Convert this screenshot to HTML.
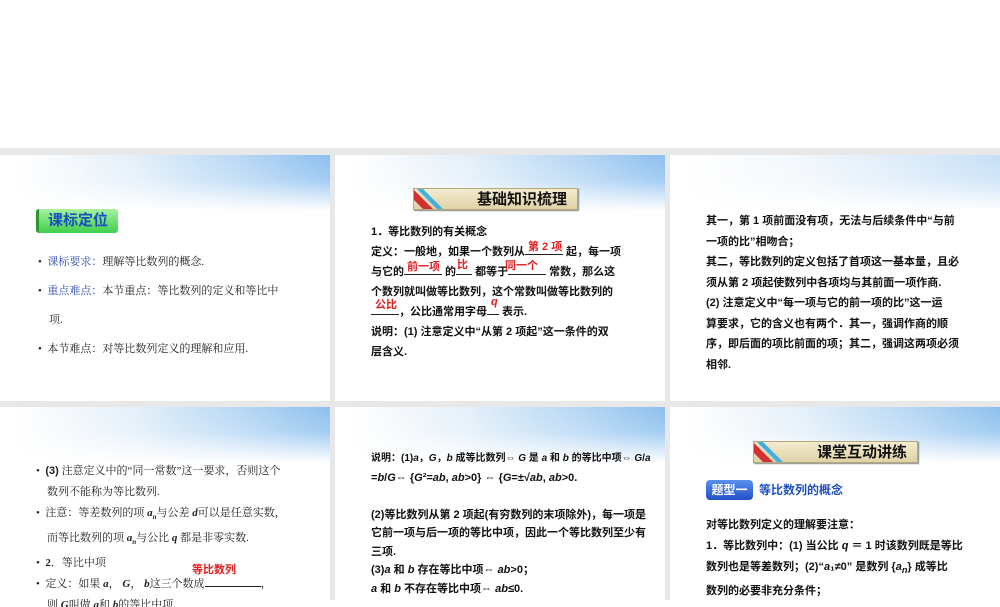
<!DOCTYPE html>
<html><head><meta charset="utf-8"><style>
*{margin:0;padding:0;box-sizing:border-box}
body{width:1000px;height:600px;background:#fff;position:relative;overflow:hidden;font-family:"Liberation Serif","Noto Serif CJK SC","Noto Sans CJK SC",serif;color:#222}
.gap{position:absolute;left:0;top:148px;width:1000px;height:452px;background:#e8e8e8}
.s{position:absolute;width:330px;background:#fff;overflow:hidden}
.hd{position:absolute;left:0;top:0;width:330px;height:55px;background:linear-gradient(90deg,#fff 5%,#e4f0fa 40%,#b4d6f4 75%,#8cc0ee 100%)}
.hd2{position:absolute;left:0;top:0;width:330px;height:56px;background:linear-gradient(180deg,rgba(255,255,255,0) 0%,rgba(255,255,255,.2) 45%,#fff 100%)}
.t{position:absolute;font-size:11px;line-height:20px;font-family:"Liberation Sans","Noto Sans CJK SC",sans-serif;font-weight:bold;color:#111}
.r{color:#e02020;font-weight:bold;position:absolute;font-size:11px;font-family:"Liberation Sans","Noto Sans CJK SC",sans-serif}
.u{display:inline-block;border-bottom:1px solid #222;height:12px}
.ban{position:absolute;height:22px;background:linear-gradient(#f4ecd0,#e0d2a6);border:1px solid #b8a878;box-shadow:1px 1px 1px #888;font-family:"Liberation Sans","Noto Sans CJK SC",sans-serif;font-weight:bold;font-size:15px;color:#111;text-align:right;padding-right:10px;line-height:21px;overflow:hidden}
.ban i{position:absolute;top:-4px;height:30px;transform:skewX(45deg)}
.pl{position:absolute;font-size:11px;line-height:25px;color:#222;font-family:"Liberation Serif","Noto Serif CJK SC",serif}
</style></head><body>
<div class="gap"></div>

<div class="s" style="left:0;top:155px;height:246px">
<div class="hd"></div><div class="hd2"></div>
<div style="position:absolute;left:36px;top:54px;width:82px;height:24px;background:linear-gradient(#a8f0a0,#3fd04a);border-radius:3px;border-left:3px solid #2a9a30;font-family:'Liberation Sans','Noto Sans CJK SC',sans-serif;font-weight:bold;font-size:15px;color:#1a4fc0;line-height:24px;padding-left:9px">课标定位</div>
<div class="pl" style="left:38px;top:93px;width:290px;line-height:29px">
• &nbsp;<span style="color:#3050b0">课标要求：</span>理解等比数列的概念.<br>
• &nbsp;<span style="color:#3050b0">重点难点：</span>本节重点：等比数列的定义和等比中<br>
&nbsp;&nbsp;&nbsp;&nbsp;项.<br>
• &nbsp;本节难点：对等比数列定义的理解和应用.</div>
</div>

<div class="s" style="left:335px;top:155px;height:246px">
<div class="hd"></div><div class="hd2"></div>
<div class="ban" style="left:78px;top:33px;width:165px"><i style="left:0;width:10px;background:#d03030"></i><i style="left:14px;width:6px;background:#40b0e0"></i>基础知识梳理</div>
<div class="t" style="left:36px;top:67px;width:290px">1．等比数列的有关概念<br>
定义：一般地，如果一个数列从<span class="u" style="width:38px"></span> 起，每一项<br>
与它的<span class="u" style="width:38px"></span> 的<span class="u" style="width:16px"></span> 都等于<span class="u" style="width:38px"></span> 常数，那么这<br>
个数列就叫做等比数列，这个常数叫做等比数列的<br>
<span class="u" style="width:28px"></span>，公比通常用字母<span class="u" style="width:12px"></span> 表示.<br>
说明：(1) 注意定义中“从第 2 项起”这一条件的双<br>层含义.</div>
<div class="r" style="left:193px;top:83px">第 2 项</div>
<div class="r" style="left:72px;top:103px">前一项</div>
<div class="r" style="left:122px;top:101px">比</div>
<div class="r" style="left:170px;top:102px">同一个</div>
<div class="r" style="left:40px;top:141px">公比</div>
<div class="r" style="left:156px;top:141px;font-style:italic">q</div>
</div>

<div class="s" style="left:670px;top:155px;height:246px">
<div class="hd" style="opacity:.5"></div><div class="hd2"></div>
<div class="t" style="left:36px;top:56px;width:292px;line-height:20.5px">其一，第 1 项前面没有项，无法与后续条件中“与前<br>一项的比”相吻合；<br>其二，等比数列的定义包括了首项这一基本量，且必<br>须从第 2 项起使数列中各项均与其前面一项作商.<br>(2) 注意定义中“每一项与它的前一项的比”这一运<br>算要求，它的含义也有两个．其一，强调作商的顺<br>序，即后面的项比前面的项；其二，强调这两项必须<br>相邻.</div>
</div>

<div class="s" style="left:0;top:407px;height:200px">
<div class="hd"></div><div class="hd2"></div>
<div class="pl" style="left:36px;top:54px;width:292px;line-height:21px">
• &nbsp;<b style="font-family:'Liberation Sans',sans-serif">(3)</b> 注意定义中的“同一常数”这一要求，否则这个<br>
&nbsp;&nbsp;&nbsp;&nbsp;数列不能称为等比数列.<br>
• &nbsp;注意：等差数列的项 <b><i>a<sub style="font-size:7px">n</sub></i></b>与公差 <b><i>d</i></b>可以是任意实数，<br>
&nbsp;&nbsp;&nbsp;&nbsp;而等比数列的项 <b><i>a<sub style="font-size:7px">n</sub></i></b>与公比 <b><i>q</i></b> 都是非零实数.<br>
• &nbsp;<b>2</b>．等比中项<br>
• &nbsp;定义：如果 <b><i>a</i></b>， <b><i>G</i></b>， <b><i>b</i></b>这三个数成<span class="u" style="width:56px"></span>，<br>
&nbsp;&nbsp;&nbsp;&nbsp;则 <b><i>G</i></b>叫做 <b><i>a</i></b>和 <b><i>b</i></b>的等比中项.</div>
<div class="r" style="left:192px;top:154px">等比数列</div>
</div>

<div class="s" style="left:335px;top:407px;height:200px">
<div class="hd"></div><div class="hd2"></div>
<div class="t" style="left:36px;top:42px;width:294px;font-size:11px;line-height:18.5px;white-space:nowrap"><span style="font-size:10px">说明：(1)<i>a</i>，<i>G</i>，<i>b</i> 成等比数列⇔ <i>G</i> 是 <i>a</i> 和 <i>b</i> 的等比中项⇔ <i>G</i>/<i>a</i></span><br>
=<i>b</i>/<i>G</i>⇔ {<i>G</i>²=<i>ab</i>, <i>ab</i>&gt;0} ⇔ {<i>G</i>=±√<i>ab</i>, <i>ab</i>&gt;0.<br><br>
(2)等比数列从第 2 项起(有穷数列的末项除外)，每一项是<br>它前一项与后一项的等比中项，因此一个等比数列至少有<br>三项.<br>(3)<i>a</i> 和 <i>b</i> 存在等比中项⇔ <i>ab</i>&gt;0；<br><i>a</i> 和 <i>b</i> 不存在等比中项⇔ <i>ab</i>≤0.</div>
</div>

<div class="s" style="left:670px;top:407px;height:200px">
<div class="hd"></div><div class="hd2"></div>
<div class="ban" style="left:83px;top:34px;width:165px"><i style="left:0;width:10px;background:#d03030"></i><i style="left:14px;width:6px;background:#40b0e0"></i>课堂互动讲练</div>
<div style="position:absolute;left:36px;top:73px;width:47px;height:20px;background:linear-gradient(#5a90f0,#2050c8);border-radius:4px;color:#fff;font-family:'Liberation Sans','Noto Sans CJK SC',sans-serif;font-weight:bold;font-size:12px;line-height:20px;text-align:center">题型一</div>
<div style="position:absolute;left:89px;top:74px;color:#2050c0;font-family:'Liberation Sans','Noto Sans CJK SC',sans-serif;font-weight:bold;font-size:12px">等比数列的概念</div>
<div class="t" style="left:36px;top:108px;width:292px;line-height:21px">对等比数列定义的理解要注意：<br>1．等比数列中：(1) 当公比 <i>q</i> ＝ 1 时该数列既是等比<br>数列也是等差数列；(2)“<i>a</i>₁≠0” 是数列 {<i>a<sub>n</sub></i>} 成等比<br>数列的必要非充分条件；</div>
</div>
</body></html>
